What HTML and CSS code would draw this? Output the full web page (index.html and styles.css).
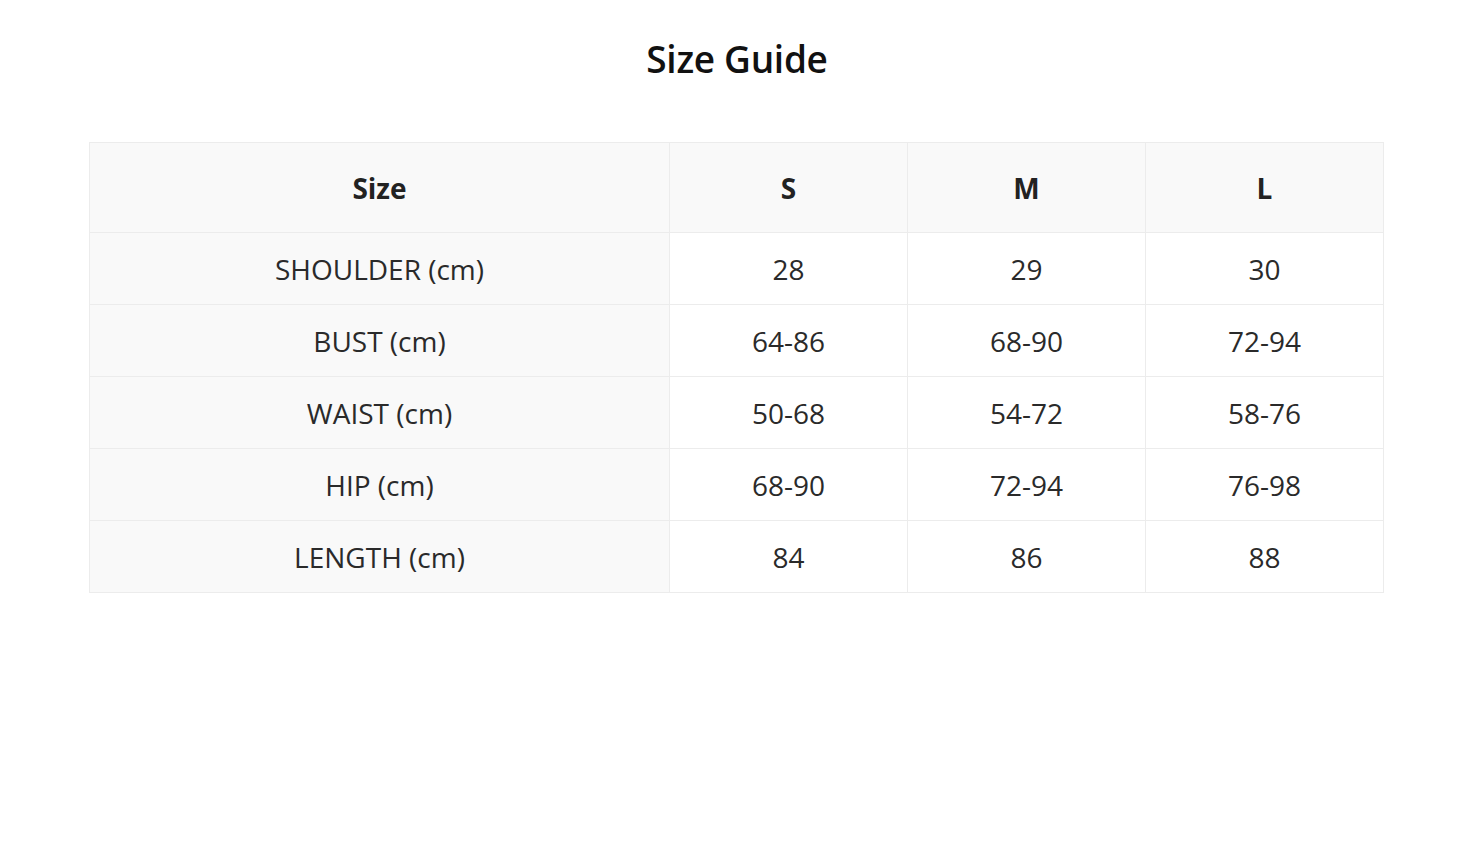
FILE: index.html
```html
<!DOCTYPE html>
<html lang="en">
<head>
<meta charset="utf-8">
<title>Size Guide</title>
<link rel="stylesheet" href="styles.css">
</head>
<body>
<main class="page">
  <h1 class="title">Size Guide</h1>
  <table class="size-table">
    <colgroup>
      <col class="col-label">
      <col class="col-size">
      <col class="col-size">
      <col class="col-size">
    </colgroup>
    <thead>
      <tr><th>Size</th><th>S</th><th>M</th><th>L</th></tr>
    </thead>
    <tbody>
      <tr><td class="label">SHOULDER (cm)</td><td>28</td><td>29</td><td>30</td></tr>
      <tr><td class="label">BUST (cm)</td><td>64-86</td><td>68-90</td><td>72-94</td></tr>
      <tr><td class="label">WAIST (cm)</td><td>50-68</td><td>54-72</td><td>58-76</td></tr>
      <tr><td class="label">HIP (cm)</td><td>68-90</td><td>72-94</td><td>76-98</td></tr>
      <tr><td class="label">LENGTH (cm)</td><td>84</td><td>86</td><td>88</td></tr>
    </tbody>
  </table>
</main>
</body>
</html>
```

FILE: styles.css
```css
html, body {
  margin: 0;
  padding: 0;
  background: #ffffff;
}

body {
  font-family: "Open Sans", "Liberation Sans", sans-serif;
  color: #222222;
}

.page {
  padding: 30px 0 0 89px;
  display: flex;
  flex-direction: column;
  align-items: flex-start;
}

.title {
  align-self: stretch;
  margin: 0 89px 54px 0;
  font-size: 37px;
  font-weight: 600;
  letter-spacing: -0.3px;
  line-height: 58px;
  color: #111111;
  text-align: center;
}

.size-table {
  width: 1295px;
  border-collapse: collapse;
  table-layout: fixed;
  border: 1px solid #ececec;
}

.col-label { width: 580px; }
.col-size { width: 238px; }

.size-table th,
.size-table td {
  border: 1px solid #ececec;
  text-align: center;
  padding: 0;
  font-size: 28px;
}

.size-table th {
  height: 89px;
  font-weight: 700;
  background: #f9f9f9;
  color: #222222;
}

.size-table td {
  height: 71px;
  font-weight: 400;
  color: #2a2a2a;
}

.size-table td.label {
  background: #f9f9f9;
}
```
